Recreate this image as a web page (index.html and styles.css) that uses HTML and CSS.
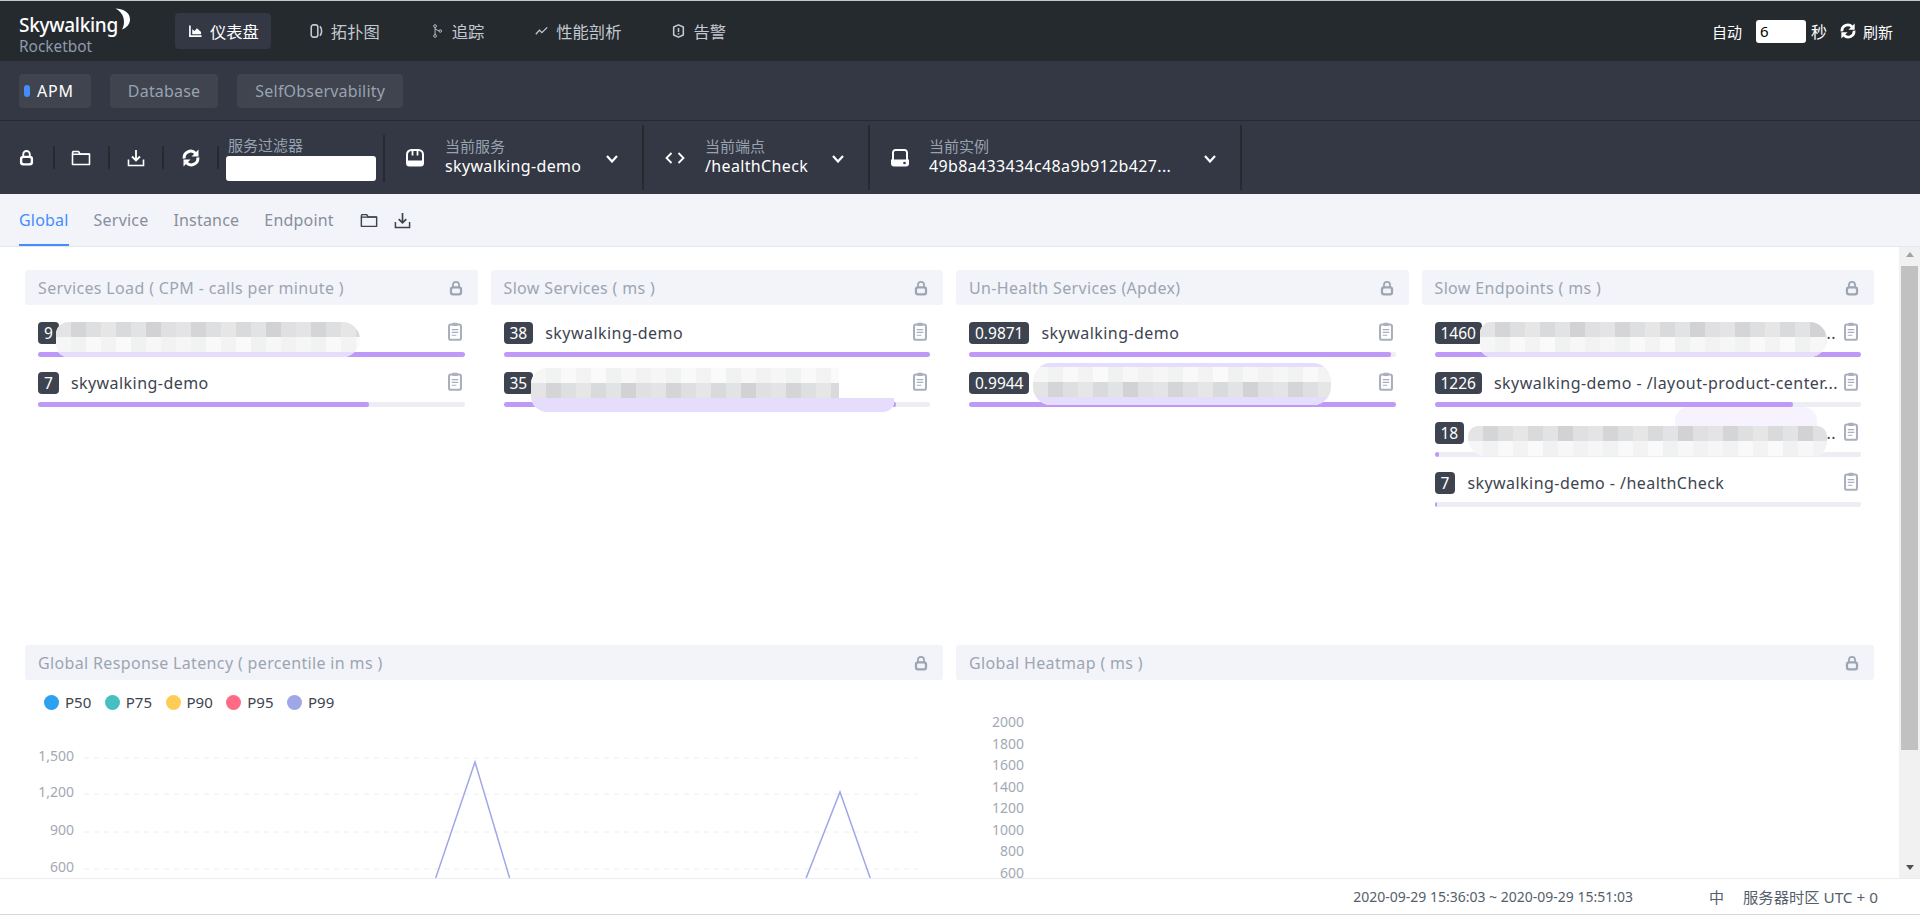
FILE: index.html
```html
<!DOCTYPE html>
<html lang="zh-CN">
<head>
    <meta charset="UTF-8">
    <title>Rocketbot</title>
    <link rel="stylesheet" href="styles.css">
</head>
<body>
    <svg class="icon-defs" aria-hidden="true">
        <symbol id="i-lock" viewBox="0 0 16 18"><path d="M4.5 8V5.5a3.5 3.5 0 0 1 7 0V8" fill="none" stroke="currentColor" stroke-width="2"/><rect x="1" y="7" width="14" height="10.5" rx="3.5" fill="currentColor"/><rect x="3.5" y="9.5" width="9" height="5.5" rx="1.5" class="hole"/></symbol>
        <symbol id="i-folder" viewBox="0 0 20 16"><path d="M1.5 3V14.5H18.5V4H9L7.5 1.5H2z" fill="none" stroke="currentColor" stroke-width="1.6" stroke-linejoin="round"/><path d="M1.5 3.5H18.5V5H1.5z" fill="currentColor"/></symbol>
        <symbol id="i-download" viewBox="0 0 18 18"><path d="M9 1V11M5 7.5L9 11.5L13 7.5" fill="none" stroke="currentColor" stroke-width="1.8"/><path d="M1.5 10.5V16.5H16.5V10.5" fill="none" stroke="currentColor" stroke-width="1.6"/></symbol>
        <symbol id="i-refresh" viewBox="0 0 20 18"><path d="M3.2 9.5A6.6 6.6 0 0 1 14.5 4.2M16.8 8.5A6.6 6.6 0 0 1 5.5 13.8" fill="none" stroke="currentColor" stroke-width="3"/><path d="M17.5 0.5V7.5H10.5zM2.5 17.5V10.5H9.5z" fill="currentColor"/></symbol>
        <symbol id="i-clip" viewBox="0 0 15 20"><rect x="1.1" y="2.5" width="12.8" height="16.4" rx="2" fill="none" stroke="currentColor" stroke-width="2.2"/><rect x="4.5" y="0.5" width="6" height="3.5" rx="1" fill="currentColor"/><path d="M4 8H11M4 11H11M4 14H9" stroke="currentColor" stroke-width="1.3"/></symbol>
        <symbol id="i-server" viewBox="0 0 18 18"><path d="M1 12V5.500A4.500 4.500 0 0 1 5.500 1H12.500A4.500 4.500 0 0 1 17 5.500V12" fill="none" stroke="currentColor" stroke-width="2"/><path d="M6.500 1V6.500M11.500 1V6.500" stroke="currentColor" stroke-width="1.8"/><path d="M0 11.500H18V14A3.500 3.500 0 0 1 14.500 17.500H3.500A3.500 3.500 0 0 1 0 14z" fill="currentColor"/></symbol>
        <symbol id="i-code" viewBox="0 0 20 12"><path d="M6.500 1L1.500 6L6.500 11M13.500 1L18.500 6L13.500 11" fill="none" stroke="currentColor" stroke-width="1.8"/></symbol>
        <symbol id="i-disk" viewBox="0 0 20 18"><path d="M3 11V3.500A2.500 2.500 0 0 1 5.500 1H14.500A2.500 2.500 0 0 1 17 3.500V11" fill="none" stroke="currentColor" stroke-width="2"/><path d="M1 10.500H19V14.500A3 3 0 0 1 16 17.500H4A3 3 0 0 1 1 14.500z" fill="currentColor"/><circle cx="14.500" cy="14" r="1.300" class="hole"/></symbol>
        <symbol id="i-chart" viewBox="0 0 14 14"><path d="M1 1V12.500H13.500" fill="none" stroke="currentColor" stroke-width="1.8"/><path d="M3.500 10.500V5L6 7L8.500 4L13 8V10.500z" fill="currentColor"/></symbol>
        <symbol id="i-topo" viewBox="0 0 14 16"><rect x="1" y="1" width="7.500" height="14" rx="2.500" fill="none" stroke="currentColor" stroke-width="1.8"/><path d="M11 2.500C13.500 5.500 13.500 10.500 11 13.500" fill="none" stroke="currentColor" stroke-width="1.8"/></symbol>
        <symbol id="i-trace" viewBox="0 0 13 20"><circle cx="3" cy="3" r="2" fill="none" stroke="currentColor" stroke-width="1.3"/><circle cx="3" cy="17" r="2" fill="none" stroke="currentColor" stroke-width="1.3"/><circle cx="10.500" cy="10" r="1.800" fill="none" stroke="currentColor" stroke-width="1.3"/><path d="M3 5V15M3 7L8.700 10" stroke="currentColor" stroke-width="1.3" fill="none"/></symbol>
        <symbol id="i-perf" viewBox="0 0 16 12"><path d="M1 10L5.500 5L8.500 8L15 1.500" fill="none" stroke="currentColor" stroke-width="1.6"/></symbol>
        <symbol id="i-alarm" viewBox="0 0 14 16"><path d="M7 1L12.500 3.500V12.500L7 15L1.500 12.500V3.500z" fill="none" stroke="currentColor" stroke-width="1.8" stroke-linejoin="round"/><path d="M7 4.500V9M7 10.500V12" stroke="currentColor" stroke-width="1.8"/></symbol>
        <symbol id="i-chevron" viewBox="0 0 12 8"><path d="M1 1L6 6.500L11 1" fill="none" stroke="currentColor" stroke-width="2.2"/></symbol>
    </svg>

    <header class="topbar">
        <div class="logo">
            <div class="logo-mark">
                <span class="logo-name">Skywalking</span>
                <svg class="logo-moon" viewBox="0 0 16 22"><path d="M1 0.500C8 0.500 15.500 4 15.500 11.500C15.500 16 12 20 7.500 21.500C9.500 18 10 14 9 10C8 6 5 2.500 1 0.500z" fill="#fff"/></svg>
            </div>
            <div class="logo-sub">Rocketbot</div>
        </div>
        <nav class="nav">
            <a class="nav-item active"><svg class="nav-icon"><use href="#i-chart"/></svg>仪表盘</a>
            <a class="nav-item"><svg class="nav-icon"><use href="#i-topo"/></svg>拓扑图</a>
            <a class="nav-item"><svg class="nav-icon"><use href="#i-trace"/></svg>追踪</a>
            <a class="nav-item"><svg class="nav-icon"><use href="#i-perf"/></svg>性能剖析</a>
            <a class="nav-item"><svg class="nav-icon"><use href="#i-alarm"/></svg>告警</a>
        </nav>
        <div class="auto">
            <span>自动</span>
            <div class="auto-input">6</div>
            <span class="auto-unit">秒</span>
            <svg class="auto-refresh"><use href="#i-refresh"/></svg>
            <span>刷新</span>
        </div>
    </header>

    <div class="groups">
        <a class="group active"><i class="group-dot"></i>APM</a>
        <a class="group">Database</a>
        <a class="group">SelfObservability</a>
    </div>

    <div class="toolbar">
        <div class="tool"><svg class="tool-lock"><use href="#i-lock"/></svg></div>
        <div class="tool"><svg class="tool-folder"><use href="#i-folder"/></svg></div>
        <div class="tool"><svg class="tool-download"><use href="#i-download"/></svg></div>
        <div class="tool"><svg class="tool-refresh"><use href="#i-refresh"/></svg></div>
        <div class="filter">
            <div class="select-label">服务过滤器</div>
            <div class="filter-input"></div>
        </div>
        <div class="select select-service">
            <svg class="select-icon"><use href="#i-server"/></svg>
            <div class="select-text">
                <div class="select-label">当前服务</div>
                <div class="select-value">skywalking-demo</div>
            </div>
            <svg class="select-arrow"><use href="#i-chevron"/></svg>
        </div>
        <div class="select select-endpoint">
            <svg class="select-icon"><use href="#i-code"/></svg>
            <div class="select-text">
                <div class="select-label">当前端点</div>
                <div class="select-value">/healthCheck</div>
            </div>
            <svg class="select-arrow"><use href="#i-chevron"/></svg>
        </div>
        <div class="select select-instance">
            <svg class="select-icon"><use href="#i-disk"/></svg>
            <div class="select-text">
                <div class="select-label">当前实例</div>
                <div class="select-value">49b8a433434c48a9b912b427...</div>
            </div>
            <svg class="select-arrow"><use href="#i-chevron"/></svg>
        </div>
    </div>

    <div class="tabs">
        <a class="tab active">Global</a>
        <a class="tab">Service</a>
        <a class="tab">Instance</a>
        <a class="tab">Endpoint</a>
        <svg class="tab-folder"><use href="#i-folder"/></svg>
        <svg class="tab-download"><use href="#i-download"/></svg>
    </div>

    <main class="main">
        <div class="panels">
            <section class="panel">
                <div class="panel-head"><span>Services Load ( CPM - calls per minute )</span><svg class="panel-lock"><use href="#i-lock"/></svg></div>
                <div class="panel-list">
                    <div class="row">
                        <div class="row-line"><b class="badge">9</b><span class="row-name"></span><svg class="row-clip"><use href="#i-clip"/></svg></div>
                        <div class="bar"><div class="bar-fill" style="width:100%"></div></div>
                        <div class="blur blur-a"><div class="px px-dark"></div><div class="px px-light"></div><div class="px-tint"></div></div>
                    </div>
                    <div class="row">
                        <div class="row-line"><b class="badge">7</b><span class="row-name">skywalking-demo</span><svg class="row-clip"><use href="#i-clip"/></svg></div>
                        <div class="bar"><div class="bar-fill" style="width:77.7%"></div></div>
                    </div>
                </div>
            </section>
            <section class="panel">
                <div class="panel-head"><span>Slow Services ( ms )</span><svg class="panel-lock"><use href="#i-lock"/></svg></div>
                <div class="panel-list">
                    <div class="row">
                        <div class="row-line"><b class="badge">38</b><span class="row-name">skywalking-demo</span><svg class="row-clip"><use href="#i-clip"/></svg></div>
                        <div class="bar"><div class="bar-fill" style="width:100%"></div></div>
                    </div>
                    <div class="row">
                        <div class="row-line"><b class="badge">35</b><span class="row-name"></span><svg class="row-clip"><use href="#i-clip"/></svg></div>
                        <div class="bar"><div class="bar-fill" style="width:92%"></div></div>
                        <div class="blur blur-b"><div class="px px-light px-short"></div><div class="px px-dark px-short"></div><div class="px-tint px-tall"></div></div>
                    </div>
                </div>
            </section>
            <section class="panel">
                <div class="panel-head"><span>Un-Health Services (Apdex)</span><svg class="panel-lock"><use href="#i-lock"/></svg></div>
                <div class="panel-list">
                    <div class="row">
                        <div class="row-line"><b class="badge">0.9871</b><span class="row-name">skywalking-demo</span><svg class="row-clip"><use href="#i-clip"/></svg></div>
                        <div class="bar"><div class="bar-fill" style="width:99%"></div></div>
                    </div>
                    <div class="row">
                        <div class="row-line"><b class="badge">0.9944</b><span class="row-name"></span><svg class="row-clip"><use href="#i-clip"/></svg></div>
                        <div class="bar"><div class="bar-fill" style="width:100%"></div></div>
                        <div class="blur blur-c"><div class="px-tint px-thin"></div><div class="px px-light"></div><div class="px px-dark"></div><div class="px-tint"></div></div>
                    </div>
                </div>
            </section>
            <section class="panel">
                <div class="panel-head"><span>Slow Endpoints ( ms )</span><svg class="panel-lock"><use href="#i-lock"/></svg></div>
                <div class="panel-list">
                    <div class="row">
                        <div class="row-line"><b class="badge">1460</b><span class="row-name row-tail">..</span><svg class="row-clip"><use href="#i-clip"/></svg></div>
                        <div class="bar"><div class="bar-fill" style="width:100%"></div></div>
                        <div class="blur blur-d"><div class="px px-dark"></div><div class="px px-light"></div><div class="px-tint"></div></div>
                    </div>
                    <div class="row">
                        <div class="row-line"><b class="badge">1226</b><span class="row-name">skywalking-demo - /layout-product-center...</span><svg class="row-clip"><use href="#i-clip"/></svg></div>
                        <div class="bar"><div class="bar-fill" style="width:84%"></div></div>
                    </div>
                    <div class="row">
                        <div class="row-line"><b class="badge">18</b><span class="row-name row-tail">t...</span><svg class="row-clip"><use href="#i-clip"/></svg></div>
                        <div class="bar"><div class="bar-fill" style="width:1%"></div></div>
                        <div class="blur blur-e"><div class="px px-dark"></div><div class="px px-light"></div></div>
                        <div class="blur-f"></div>
                    </div>
                    <div class="row">
                        <div class="row-line"><b class="badge">7</b><span class="row-name">skywalking-demo - /healthCheck</span><svg class="row-clip"><use href="#i-clip"/></svg></div>
                        <div class="bar"><div class="bar-fill" style="width:0.5%"></div></div>
                    </div>
                </div>
            </section>
            <section class="panel panel-wide">
                <div class="panel-head"><span>Global Response Latency ( percentile in ms )</span><svg class="panel-lock"><use href="#i-lock"/></svg></div>
                <div class="legend">
                    <span class="legend-item"><i class="legend-dot p50"></i>P50</span>
                    <span class="legend-item"><i class="legend-dot p75"></i>P75</span>
                    <span class="legend-item"><i class="legend-dot p90"></i>P90</span>
                    <span class="legend-item"><i class="legend-dot p95"></i>P95</span>
                    <span class="legend-item"><i class="legend-dot p99"></i>P99</span>
                </div>
                <svg class="chart" viewBox="0 0 918 180">
                    <g class="chart-grid">
                        <path d="M59 47H893M59 83H893M59 121H893M59 158H893"/>
                    </g>
                    <g class="chart-labels">
                        <text x="49" y="50">1,500</text>
                        <text x="49" y="86">1,200</text>
                        <text x="49" y="124">900</text>
                        <text x="49" y="161">600</text>
                    </g>
                    <path class="chart-line" d="M408 175L450 51L487 175M778 175L815 81L848 175"/>
                </svg>
            </section>
            <section class="panel panel-wide">
                <div class="panel-head"><span>Global Heatmap ( ms )</span><svg class="panel-lock"><use href="#i-lock"/></svg></div>
                <div class="heat-axis">
                    <span>2000</span><span>1800</span><span>1600</span><span>1400</span><span>1200</span><span>1000</span><span>800</span><span>600</span>
                </div>
            </section>
        </div>
        <div class="scrollbar">
            <span class="scroll-up"></span>
            <div class="scroll-thumb"></div>
            <span class="scroll-down"></span>
        </div>
    </main>

    <footer class="footer">
        <span class="footer-time">2020-09-29 15:36:03 ~ 2020-09-29 15:51:03</span>
        <span class="footer-lang">中</span>
        <span class="footer-zone">服务器时区 UTC + 0</span>
    </footer>
</body>
</html>
```

FILE: styles.css
```css
* {
    box-sizing: border-box;
}

html,
body {
    margin: 0;
    height: 100%;
    overflow: hidden;
}

body {
    display: flex;
    flex-direction: column;
    border-top: 1px solid #c9c9c9;
    font-family: "Noto Sans", "Noto Sans CJK SC", sans-serif;
    font-size: 15px;
    color: #3d444f;
    background: #fff;
}

.icon-defs {
    position: absolute;
    width: 0;
    height: 0;
}

.hole {
    fill: var(--hole, #333844);
}

/* top nav */
.topbar {
    display: flex;
    align-items: center;
    flex: none;
    height: 60px;
    padding: 0 27px 0 19px;
    background: #252a2f;
    color: #fff;
}

.logo {
    width: 156px;
    margin-top: 6px;
}

.logo-mark {
    position: relative;
    height: 26px;
}

.logo-name {
    font-size: 19px;
    font-weight: 500;
    line-height: 26px;
    letter-spacing: -0.3px;
}

.logo-moon {
    position: absolute;
    left: 95px;
    top: -4px;
    width: 17px;
    height: 22px;
}

.logo-sub {
    font-size: 15.4px;
    line-height: 18px;
    color: #8f9bad;
}

.nav {
    display: flex;
    gap: 25px;
    flex: 1;
}

.nav-item {
    display: flex;
    align-items: center;
    gap: 8px;
    height: 36px;
    padding: 0 12px 0 14px;
    border-radius: 4px;
    font-size: 16.3px;
    color: #c4c8cf;
}

.nav-item.active {
    background: #333844;
    color: #fff;
}

.nav-icon {
    width: 13px;
    height: 14px;
}

.auto {
    display: flex;
    align-items: center;
    font-size: 15px;
}

.auto-input {
    width: 50px;
    height: 23px;
    margin: 0 5px 0 14px;
    padding-left: 4px;
    border-radius: 3px;
    background: #fff;
    color: #000;
    line-height: 23px;
    font-size: 15px;
}

.auto-unit {
    font-size: 16px;
    margin-right: 12px;
}

.auto-refresh {
    width: 18px;
    height: 16px;
    margin-right: 6px;
}

/* dashboard groups */
.groups {
    display: flex;
    align-items: center;
    gap: 19px;
    flex: none;
    height: 60px;
    padding: 0 19px;
    border-bottom: 1px solid #252a2f;
    background: #333844;
}

.group {
    display: flex;
    align-items: center;
    height: 34px;
    padding: 0 18px;
    border-radius: 4px;
    background: #3f444f;
    font-size: 16px;
    letter-spacing: 0.2px;
    color: #98a2b1;
}

.group.active {
    padding: 0 17px 0 5px;
    letter-spacing: 0.8px;
    color: #fff;
}

.group-dot {
    width: 6px;
    height: 12px;
    margin-right: 7px;
    border-radius: 3px;
    background: #448dfe;
}

/* selector toolbar */
.toolbar {
    display: flex;
    align-items: center;
    flex: none;
    height: 73px;
    background: #333844;
    color: #fff;
}

.tool {
    display: flex;
    align-items: center;
    justify-content: center;
    height: 23px;
    width: 54.75px;
    border-right: 2px solid #252a2f;
}

.tool-lock {
    width: 15px;
    height: 17px;
}

.tool-folder {
    width: 20px;
    height: 16px;
}

.tool-download {
    width: 18px;
    height: 18px;
}

.tool-refresh {
    width: 20px;
    height: 18px;
}

.filter {
    width: 166px;
    height: 47px;
    margin-top: 2px;
    padding-left: 7px;
    border-right: 2px solid #252a2f;
}

.filter .select-label {
    padding-left: 2px;
    line-height: 21px;
}

.filter-input {
    width: 150px;
    height: 25px;
    border-radius: 3px;
    background: #fff;
}

.select {
    display: flex;
    align-items: center;
    height: 65px;
    border-right: 2px solid #252a2f;
}

.select-service {
    width: 259px;
    padding-left: 21px;
}

.select-endpoint {
    width: 226px;
    padding-left: 21px;
}

.select-instance {
    width: 372px;
    padding-left: 20px;
}

.select-icon {
    flex: none;
    width: 18px;
    height: 18px;
    margin-right: 21px;
}

.select-endpoint .select-icon {
    width: 20px;
    height: 12px;
    margin-right: 20px;
}

.select-instance .select-icon {
    width: 20px;
    height: 18px;
    margin-right: 19px;
}

.select-text {
    flex: 1;
    margin-bottom: 4px;
}

.select-label {
    font-size: 15px;
    line-height: 20px;
    color: #98a2b1;
}

.select-value {
    font-size: 16px;
    letter-spacing: 0.35px;
    line-height: 20px;
    white-space: nowrap;
    color: #fff;
}

.select-arrow {
    flex: none;
    width: 12px;
    height: 8px;
    margin-right: 24px;
    margin-top: 2px;
}

/* tabs */
.tabs {
    display: flex;
    align-items: center;
    gap: 25px;
    flex: none;
    height: 53px;
    padding-left: 19px;
    border-bottom: 1px solid #e6e7ec;
    background: #f2f4f9;
    color: #3d444f;
}

.tab {
    height: 51px;
    line-height: 50px;
    font-size: 16px;
    letter-spacing: 0.2px;
    color: #888e9b;
}

.tab.active {
    color: #448dfe;
    border-bottom: 2px solid #448dfe;
}

.tab-folder {
    width: 18px;
    height: 15px;
    margin-left: 1px;
}

.tab-download {
    width: 17px;
    height: 17px;
    margin-left: -9px;
}

/* panels */
.main {
    display: flex;
    flex: 1;
    min-height: 0;
    overflow: hidden;
}

.panels {
    display: grid;
    grid-template-columns: repeat(4, 1fr);
    grid-template-rows: 375px auto;
    column-gap: 13px;
    width: 1874px;
    padding: 23px 0 0 25px;
}

.panel {
    min-width: 0;
}

.panel-wide {
    grid-column: span 2;
}

.panel-head {
    display: flex;
    align-items: center;
    justify-content: space-between;
    height: 35px;
    padding: 0 15px 0 13px;
    border-radius: 3px;
    background: #f2f4f9;
    font-size: 16px;
    letter-spacing: 0.35px;
    color: #9da5b2;
}

.panel-lock {
    --hole: #f2f4f9;
    width: 14px;
    height: 16px;
}

.panel-list {
    padding: 17px 13px 0;
}

.row {
    position: relative;
    height: 50px;
}

.row-line {
    display: flex;
    align-items: center;
    height: 30px;
    padding-bottom: 8px;
}

.badge {
    flex: none;
    height: 22px;
    padding: 0 6px;
    border-radius: 4px;
    background: #3d444f;
    color: #fff;
    font-size: 15.5px;
    font-weight: 400;
    line-height: 22px;
}

.row-name {
    flex: 1;
    min-width: 0;
    padding-left: 12px;
    overflow: hidden;
    white-space: nowrap;
    font-size: 16px;
    letter-spacing: 0.45px;
    color: #3d444f;
}

.row-tail {
    text-align: right;
    padding-right: 5px;
}

.row-clip {
    flex: none;
    width: 14px;
    height: 19px;
    margin: -3px 3px 0 3px;
    color: #a9afbd;
}

.bar {
    height: 5px;
    border-radius: 2px;
    background: #edeef5;
    overflow: hidden;
}

.bar-fill {
    height: 100%;
    border-radius: 2px;
    background: #bf99f8;
}

/* redacted names, painted over the rows */
.blur {
    position: absolute;
    display: flex;
    flex-direction: column;
    overflow: hidden;
    background: #fff;
}

.blur-a {
    left: 18px;
    top: 0;
    width: 304px;
    height: 35px;
    border-radius: 14px 20px 20px 14px;
}

.blur-b {
    left: 27px;
    top: -4px;
    width: 363px;
    height: 44px;
    border-radius: 16px 4px 10px 16px;
}

.blur-c {
    left: 64px;
    top: -9px;
    width: 298px;
    height: 42px;
    border-radius: 18px;
}

.blur-d {
    left: 45px;
    top: 0;
    width: 347px;
    height: 35px;
    border-radius: 14px 22px 22px 14px;
}

.blur-e {
    left: 33px;
    top: 4px;
    width: 359px;
    height: 30px;
    border-radius: 10px 10px 14px 18px;
}

.blur-f {
    position: absolute;
    left: 240px;
    top: -15px;
    width: 142px;
    height: 19px;
    border-radius: 14px 14px 0 0;
    background: #f6f3fe;
}

.px {
    flex: none;
    height: 15px;
    background-size: 120px 15px;
}

.px-dark {
    background-image: linear-gradient(90deg, #e4e4e6 0 15px, #d5d5d8 15px 30px, #dedfe1 30px 45px, #e6e6e6 45px 60px, #d9dadc 60px 75px, #e2e3e5 75px 90px, #d2d1d3 90px 105px, #e0e0e2 105px 120px);
}

.px-light {
    background-image: linear-gradient(90deg, #f6f6f6 0 15px, #f1f2f2 15px 30px, #f9f9f9 30px 45px, #f3f3f4 45px 60px, #fafafa 60px 75px, #f0f1f1 75px 90px, #f7f7f7 90px 105px, #f2f2f3 105px 120px);
}

.px-short {
    width: 85%;
}

.px-tint {
    flex: 1;
    background: #e6dcfb;
}

.px-thin {
    flex: none;
    height: 4px;
}

.px-tall {
    flex: 1;
}

/* latency chart */
.legend {
    display: flex;
    gap: 13.5px;
    height: 18px;
    margin: 13px 0 0 19px;
    align-items: center;
}

.legend-item {
    display: flex;
    align-items: center;
    gap: 6px;
    font-size: 15px;
    color: #3d444f;
}

.legend-dot {
    width: 15px;
    height: 15px;
    border-radius: 50%;
}

.p50 { background: #2ba1ef; }
.p75 { background: #45bfc0; }
.p90 { background: #ffcc55; }
.p95 { background: #ff6a84; }
.p99 { background: #a0a7e6; }

.chart {
    display: block;
    width: 918px;
    height: 180px;
}

.chart-grid path {
    fill: none;
    stroke: #eceef2;
    stroke-dasharray: 5 5;
}

.chart-labels text {
    font-size: 14px;
    fill: #a3a9b3;
    text-anchor: end;
}

.chart-line {
    fill: none;
    stroke: #a0a7e6;
    stroke-width: 1.5;
}

/* heatmap axis */
.heat-axis {
    display: flex;
    flex-direction: column;
    align-items: flex-end;
    width: 68px;
    padding-top: 31px;
    font-size: 14px;
    line-height: 21.5px;
    color: #a3a9b3;
}

/* scrollbar */
.scrollbar {
    display: flex;
    flex-direction: column;
    align-items: center;
    width: 21px;
    margin-left: auto;
    background: #f1f1f1;
}

.scroll-up,
.scroll-down {
    flex: none;
    width: 0;
    height: 0;
    margin: 5px 0 7px;
    border-left: 4px solid transparent;
    border-right: 4px solid transparent;
}

.scroll-up {
    border-bottom: 5px solid #a3a3a3;
}

.scroll-down {
    margin: auto 0 8px;
    border-top: 5px solid #505050;
}

.scroll-thumb {
    width: 17px;
    height: 484px;
    margin-top: 2px;
    background: #c1c1c1;
}

/* footer */
.footer {
    display: flex;
    align-items: center;
    justify-content: flex-end;
    flex: none;
    height: 37px;
    padding: 0 42px 1px 0;
    border-top: 1px solid #ececf0;
    border-bottom: 1px solid #d5d5de;
    background: #fff;
    font-size: 14px;
    color: #555e6b;
}

.footer-time {
    margin-right: 76px;
}

.footer-lang {
    margin-right: 19px;
    font-size: 15px;
}

.footer-zone {
    font-size: 15.3px;
}
```
